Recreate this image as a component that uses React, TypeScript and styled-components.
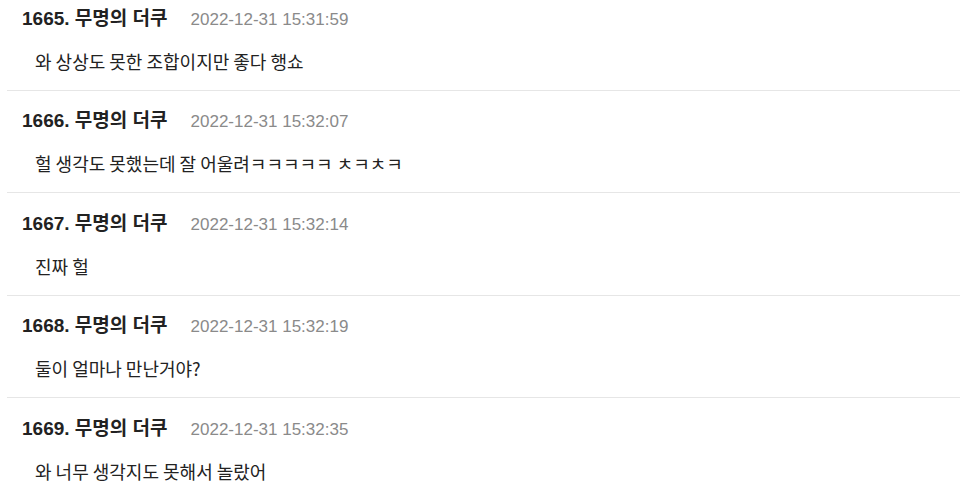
import styled, { createGlobalStyle } from "styled-components";

interface Comment {
  no: number;
  author: string;
  date: string;
  text: string;
}

const comments: Comment[] = [
  { no: 1665, author: "무명의 더쿠", date: "2022-12-31 15:31:59", text: "와 상상도 못한 조합이지만 좋다 행쇼" },
  { no: 1666, author: "무명의 더쿠", date: "2022-12-31 15:32:07", text: "헐 생각도 못했는데 잘 어울려ㅋㅋㅋㅋㅋ ㅊㅋㅊㅋ" },
  { no: 1667, author: "무명의 더쿠", date: "2022-12-31 15:32:14", text: "진짜 헐" },
  { no: 1668, author: "무명의 더쿠", date: "2022-12-31 15:32:19", text: "둘이 얼마나 만난거야?" },
  { no: 1669, author: "무명의 더쿠", date: "2022-12-31 15:32:35", text: "와 너무 생각지도 못해서 놀랐어" },
];

export default function App() {
  return (
    <>
      <GlobalStyle />
      <Page>
        <List>
          {comments.map(c => (
            <Item key={c.no}>
              <Header>
                <Author>
                  {c.no}. {c.author}
                </Author>
                <DateText>{c.date}</DateText>
              </Header>
              <Body>{c.text}</Body>
            </Item>
          ))}
        </List>
      </Page>
    </>
  );
}

const GlobalStyle = createGlobalStyle`
  html, body {
    margin: 0;
    padding: 0;
    background: #fff;
    overflow: hidden;
  }
  body {
    font-family: "Liberation Sans", "Noto Sans CJK KR", sans-serif;
    color: #222;
  }
`;

const Page = styled.div`
  width: 960px;
  height: 497px;
  overflow: hidden;
  padding-left: 7px;
  box-sizing: border-box;
`;

const List = styled.ul`
  list-style: none;
  margin: -12px 0 0;
  padding: 0;
`;

const Item = styled.li`
  padding: 20.5px 0 17px 15px;
  border-bottom: 1px solid #e6e6e6;
`;

const Header = styled.div`
  display: flex;
  align-items: baseline;
  gap: 23px;
  height: 20px;
  line-height: 20px;
`;

const Author = styled.span`
  font-size: 19px;
  font-weight: 700;
  color: #222;
`;

const DateText = styled.span`
  font-size: 17px;
  color: #8a8a8a;
`;

const Body = styled.p`
  margin: 20px 0 0 13px;
  font-family: "Noto Sans CJK KR", sans-serif;
  font-size: 18px;
  line-height: 24px;
  color: #222;
`;
